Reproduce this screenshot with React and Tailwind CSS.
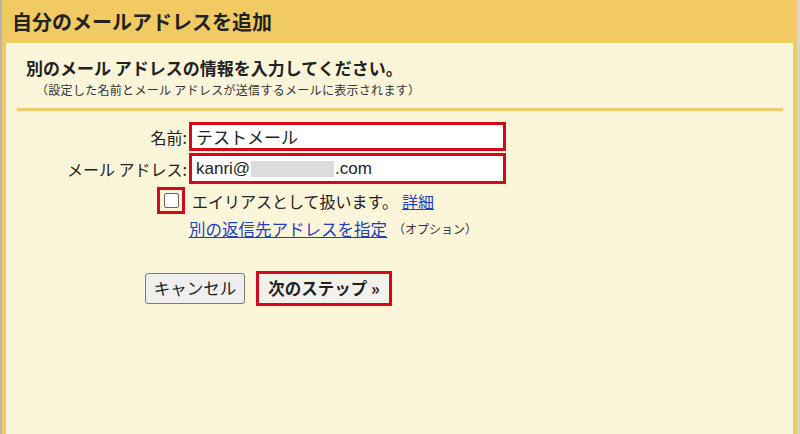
import React from 'react';

const jp = { fontFamily: '"Noto Sans CJK JP", "Noto Sans", sans-serif' };
const mixed = { fontFamily: '"Liberation Sans", "Noto Sans CJK JP", sans-serif' };

const App = () => {
  return (
    <div className="flex h-[434px] w-[800px] overflow-hidden text-[#222]" style={jp}>
      {/* left window edge */}
      <div className="w-[2px] bg-[#b8b6ae]" />

      <div className="flex flex-1 flex-col bg-[#f1ca64] px-[4px]">
        {/* Title bar */}
        <div className="flex h-[43px] items-center pl-[6px]">
          <h1 className="text-[20px] font-bold leading-none">自分のメールアドレスを追加</h1>
        </div>

        {/* Panel */}
        <div className="flex-1 bg-[#fbf5da]">
          <div className="pl-[20px] pt-[14px]">
            <h2 className="text-[17px] font-bold leading-[22px]">別のメール アドレスの情報を入力してください。</h2>
            <p className="pl-[10px] pt-[3px] text-[12px] leading-[16px] tracking-[0.3px] text-[#333]">
              （設定した名前とメール アドレスが送信するメールに表示されます）
            </p>
          </div>

          <div className="ml-[11px] mr-[10px] mt-[10px] h-[3px] bg-[#eccb6c]" />

          {/* Form */}
          <div className="flex flex-col pt-[11px]">
            <div className="flex items-center">
              <label className="w-[181px] text-right text-[16px]">名前:</label>
              <div className="ml-[2px] flex h-[29px] w-[317px] items-center border-[3px] border-[#d3091e] bg-white pl-[4px] text-[17px]">
                テストメール
              </div>
            </div>
            <div className="mt-[2px] flex items-center">
              <label className="w-[181px] text-right text-[16px]">メール アドレス:</label>
              <div
                className="ml-[2px] flex h-[31px] w-[317px] items-center border-[3px] border-[#d3091e] bg-white pl-[4px] text-[17px]"
                style={mixed}
              >
                <span>kanri@</span>
                <span className="mx-[1px] inline-block h-[16px] w-[83px] bg-[#dcdcdc]" />
                <span>.com</span>
              </div>
            </div>

            <div className="mt-[3px] flex items-center">
              <div className="flex w-[179px] justify-end">
                <div className="flex h-[27px] w-[28px] items-center justify-center border-[3px] border-[#d3091e]">
                  <div className="h-[15px] w-[15px] rounded-[2px] border border-[#666] bg-white" />
                </div>
              </div>
              <span className="ml-[7px] text-[16px]">エイリアスとして扱います。</span>
              <a href="#" className="ml-[4px] text-[16px] text-[#1f3fbf] underline">詳細</a>
            </div>

            <div className="mt-[3px] flex items-center pl-[183px]">
              <a href="#" className="text-[16.5px] text-[#1f3fbf] underline">別の返信先アドレスを指定</a>
              <span className="ml-[6px] text-[12px] text-[#333]">（オプション）</span>
            </div>

            <div className="mt-[29px] flex items-center pl-[139px]">
              <button className="h-[31px] w-[100px] rounded-[3px] border border-[#7a7a7a] bg-[#efefef] text-[16.5px]">
                キャンセル
              </button>
              <button className="ml-[11px] h-[35px] w-[136px] border-[3px] border-[#d3091e] bg-[#f3f1ec] text-[16.5px] font-bold">
                次のステップ »
              </button>
            </div>
          </div>
        </div>
      </div>

      {/* right edge */}
      <div className="w-[3px] bg-[#d6d6d6]" />
    </div>
  );
};

export default App;
